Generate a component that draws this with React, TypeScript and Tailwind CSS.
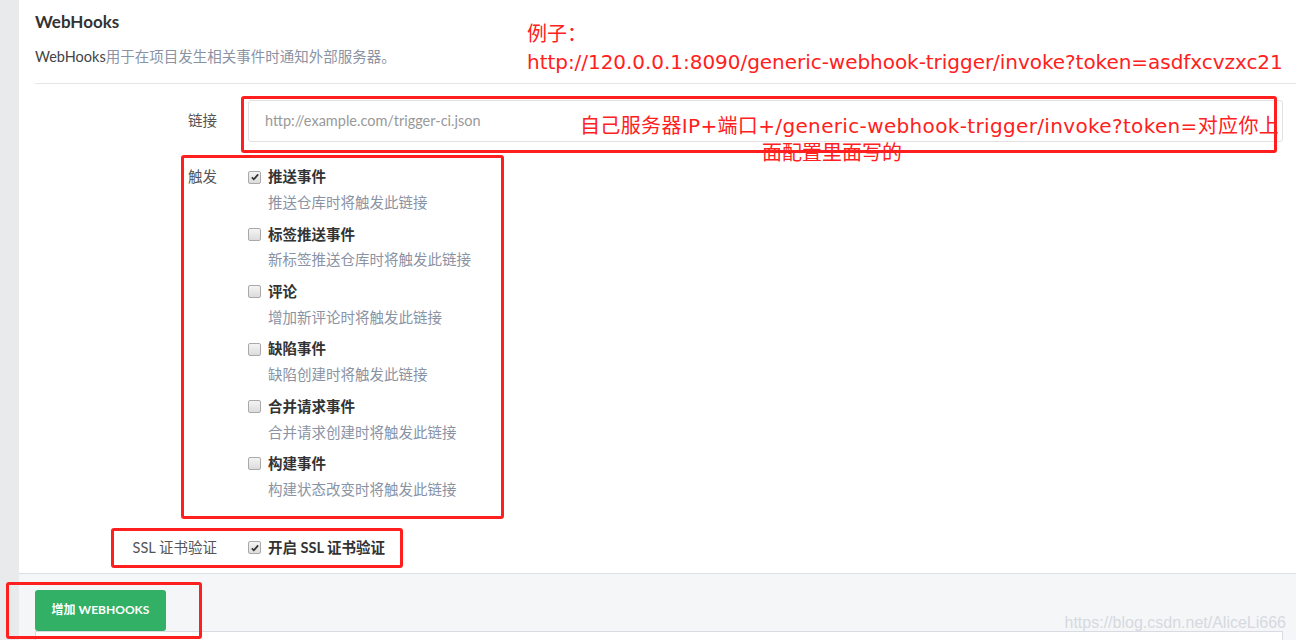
import React from "react";

const events = [
  { title: "推送事件", desc: "推送仓库时将触发此链接", checked: true },
  { title: "标签推送事件", desc: "新标签推送仓库时将触发此链接", checked: false },
  { title: "评论", desc: "增加新评论时将触发此链接", checked: false },
  { title: "缺陷事件", desc: "缺陷创建时将触发此链接", checked: false },
  { title: "合并请求事件", desc: "合并请求创建时将触发此链接", checked: false },
  { title: "构建事件", desc: "构建状态改变时将触发此链接", checked: false },
];

function Checkbox({ checked }: { checked: boolean }) {
  return (
    <span className="flex h-[13px] w-[13px] shrink-0 items-center justify-center rounded-[2px] border border-[#a9a9a9] bg-gradient-to-b from-[#f4f4f4] to-[#dcdcdc]">
      {checked && (
        <svg viewBox="0 0 12 12" className="h-[10px] w-[10px]">
          <path d="M2.2 6.4 L4.6 8.8 L9.8 2.8" fill="none" stroke="#333" strokeWidth="2" />
        </svg>
      )}
    </span>
  );
}

export default function App() {
  const font = "font-['Lato','Noto_Sans_CJK_SC',sans-serif]";
  const redFont = "font-['DejaVu_Sans','Noto_Sans_CJK_SC',sans-serif]";

  return (
    <div className={`relative flex h-[640px] w-[1296px] overflow-hidden bg-white ${font}`}>
      {/* left gutter */}
      <div className="w-[19px] shrink-0 bg-[#e9eaec]" />

      <div className="flex flex-1 flex-col">
        <div className="pl-[16px]">
          <h2 className="pt-[10px] text-[17px] font-bold leading-[24px] text-[#333]">WebHooks</h2>
          <p className="mt-[13px] text-[14.5px] leading-[20px] text-[#8a93a4]">
            <span className="text-[#444]">WebHooks</span>用于在项目发生相关事件时通知外部服务器。
          </p>
          <div className="mt-[16px] h-px bg-[#e6e6e6]" />

          {/* link row */}
          <div className="mt-[16px] flex items-center pr-[13px]">
            <label className="w-[182px] shrink-0 text-right text-[14.5px] text-[#555]">链接</label>
            <div className="ml-[31px] flex h-[42px] flex-1 items-center rounded-[3px] border border-[#e1e1e1] px-[16px] text-[14.5px] text-[#999]">
              http://example.com/trigger-ci.json
            </div>
          </div>

          {/* trigger row */}
          <div className="mt-[25px] flex">
            <label className="w-[182px] shrink-0 pl-[153px] text-[14.5px] leading-[20px] text-[#555]">触发</label>
            <div className="ml-[31px] flex flex-col gap-[11.4px]">
              {events.map((e) => (
                <div key={e.title}>
                  <div className="flex h-[20px] items-center gap-[7px]">
                    <Checkbox checked={e.checked} />
                    <span className="text-[14.5px] font-bold text-[#333]">{e.title}</span>
                  </div>
                  <div className="mt-[6px] pl-[20px] text-[14.5px] leading-[20px] text-[#8a93a4]">{e.desc}</div>
                </div>
              ))}
            </div>
          </div>

          {/* ssl row */}
          <div className="mt-[38px] flex h-[20px] items-center">
            <label className="w-[182px] shrink-0 text-right text-[14.5px] text-[#555]">SSL 证书验证</label>
            <div className="ml-[31px] flex items-center gap-[7px]">
              <Checkbox checked />
              <span className="text-[14.5px] font-bold text-[#333]">开启 SSL 证书验证</span>
            </div>
          </div>
        </div>

        {/* footer */}
        <div className="mt-[15px] flex-1 border-t border-[#dcdfe6] bg-[#f5f6f8] pl-[16px] pt-[16px]">
          <button className="h-[41px] w-[131px] rounded-[3px] bg-[#32b065] text-[12px] font-bold text-white">
            增加 WEBHOOKS
          </button>
          <div className="mr-[13px] h-[20px] border border-[#d8dbe2] bg-white" />
        </div>
      </div>

      {/* annotations */}
      <div className={`absolute left-[527px] top-[20px] text-[20px] leading-[28px] text-[#ff2020] ${redFont}`}>
        <div>例子：</div>
        <div className="whitespace-nowrap tracking-[-0.04px]">http://120.0.0.1:8090/generic-webhook-trigger/invoke?token=asdfxcvzxc21</div>
      </div>
      <div className={`absolute left-[580px] top-[112px] whitespace-nowrap text-[20px] leading-[28px] tracking-[0.35px] text-[#ff2020] ${redFont}`}>
        自己服务器IP+端口+/generic-webhook-trigger/invoke?token=对应你上
      </div>
      <div className={`absolute left-[762px] top-[139px] whitespace-nowrap text-[20px] leading-[28px] text-[#ff2020] ${redFont}`}>
        面配置里面写的
      </div>

      <div className="absolute left-[241px] top-[96px] h-[57px] w-[1036px] rounded-[3px] border-[3px] border-[#ff1f1f]" />
      <div className="absolute left-[181px] top-[155px] h-[364px] w-[323px] rounded-[3px] border-[3px] border-[#ff1f1f]" />
      <div className="absolute left-[111px] top-[528px] h-[40px] w-[292px] rounded-[3px] border-[3px] border-[#ff1f1f]" />
      <div className="absolute left-[6px] top-[582px] h-[57px] w-[196px] rounded-[3px] border-[3px] border-[#ff1f1f]" />

      <div className="absolute right-[10px] top-[611px] font-['Liberation_Sans',sans-serif] text-[16px] text-[#d6d9df]">
        https://blog.csdn.net/AliceLi666
      </div>
    </div>
  );
}
